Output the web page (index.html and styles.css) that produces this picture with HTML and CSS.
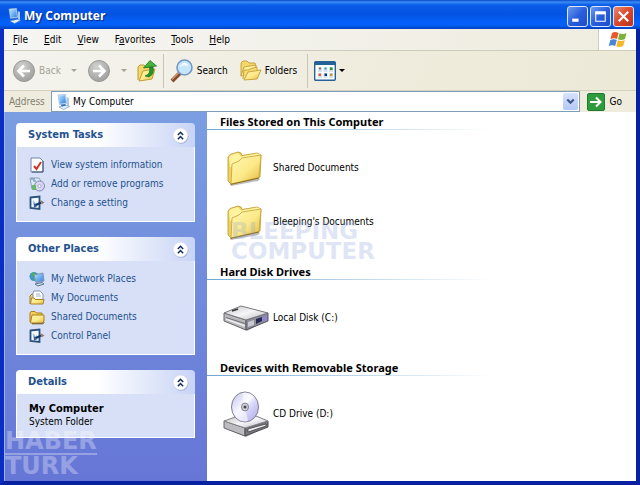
FILE: index.html
```html
<!DOCTYPE html>
<html lang="en">
<head>
<meta charset="utf-8">
<title>My Computer</title>
<link rel="stylesheet" href="styles.css">
</head>
<body>
<svg class="defs" aria-hidden="true">
  <defs>
    <linearGradient id="gFolder" x1="0" y1="0" x2="1" y2="1"><stop offset="0" stop-color="#fffab4"/><stop offset=".55" stop-color="#fce887"/><stop offset="1" stop-color="#e3b83c"/></linearGradient>
    <linearGradient id="gScreen" x1="0" y1="0" x2="1" y2="1"><stop offset="0" stop-color="#b9e4ff"/><stop offset="1" stop-color="#2b7fe0"/></linearGradient>
    <radialGradient id="gRound" cx=".4" cy=".3" r=".75"><stop offset="0" stop-color="#d2d2d0"/><stop offset="1" stop-color="#9c9c9a"/></radialGradient>
    <linearGradient id="gTop" x1="0" y1="0" x2="1" y2="1"><stop offset="0" stop-color="#c4c4c8"/><stop offset=".5" stop-color="#f6f6f8"/><stop offset="1" stop-color="#b8b8c0"/></linearGradient>
    <linearGradient id="gDisc" x1="0" y1="0" x2="1" y2="1"><stop offset="0" stop-color="#c3c2ee"/><stop offset=".45" stop-color="#f8f8ff"/><stop offset=".6" stop-color="#d8d6fa"/><stop offset="1" stop-color="#aaa7e6"/></linearGradient>
    <symbol id="pc" viewBox="0 0 16 16">
      <path d="M3 1 10.500 .3l1.300 9.200-7.300 1z" fill="#d8e6f4" stroke="#8fb4dc" stroke-width=".6"/>
      <path d="M3.800 1.800 10 1.200l1 7.600-6.200.9z" fill="url(#gScreen)"/>
      <path d="M12 3l2 1v8.500l-2-1z" fill="#a9c8ea"/>
      <path d="M4 13 10.500 11l4 1.500-6 3z" fill="#e3effa" stroke="#5d8cc0" stroke-width=".6"/>
      <path d="M5.500 10.800 10 10l1 1.500-4 1z" fill="#2e6cc0"/>
    </symbol>
    <symbol id="folder" viewBox="0 0 36 36">
      <path d="M3 35 31 28l2 1-2 2-27 5z" fill="#555" opacity=".4"/>
      <path d="M1 7 3 4.500 11 2l3 1 1 2.500 15-2.500 4 2-1 22L4 34l-3-3z" fill="#f0d25e" stroke="#b99431" stroke-width=".8"/>
      <path d="M2 7.500 4 5l7-2 3 3.500 16-3 3 1-1 5L3 17z" fill="#fff3a0"/>
      <path d="m4 34 1-20 7-3 3-3 19-3-2 22.500z" fill="url(#gFolder)" stroke="#c5a03a" stroke-width=".8"/>
      <path d="m3.500 34.500 28.500-6.500" stroke="#8e6c1c"/>
    </symbol>
    <symbol id="smallfolder" viewBox="0 0 16 16">
      <path d="M1 13V4l1-1.500h4L7.500 4H13v2" fill="#f4cf58" stroke="#a97f1b"/>
      <path d="M1.500 14 3 6h12v6l-1.500 2z" fill="url(#gFolder)" stroke="#a97f1b"/>
      <path d="M3 14.800h11l1.300-1.800" fill="none" stroke="#665220"/>
    </symbol>
    <symbol id="panel" viewBox="0 0 16 16">
      <path d="m1.500 2.500 9-1v12.500l-9-1z" fill="#f5faff" stroke="#2a517e" stroke-width="1.800"/>
      <path d="m4 6 2 3 2-1" fill="none" stroke="#9cc0e0" stroke-width="1.500"/>
      <path d="M6 10.500 12 7.500" stroke="#183a68" stroke-width="2"/>
      <path d="m11.500 5 4 2.500-3 2z" fill="#9b776a"/>
      <path d="m4.500 8 4 3-3.500 1.500z" fill="#375f94"/>
    </symbol>
    <symbol id="chev" viewBox="0 0 16 16">
      <circle cx="8.500" cy="8.800" r="7" fill="#7083b5" opacity=".55"/>
      <circle cx="8" cy="8" r="7" fill="#fff" stroke="#cdd5ea" stroke-width=".6"/>
      <path d="m5.500 7.500 2.500-2.500 2.500 2.500M5.500 11.500 8 9l2.500 2.500" fill="none" stroke="#122a5c" stroke-width="1.400"/>
    </symbol>
  </defs>
</svg>

<div class="window">
  <header class="titlebar">
    <svg class="i16"><use href="#pc"/></svg>
    <h1>My Computer</h1>
    <div class="controls">
      <button class="ctl" aria-label="Minimize"><svg viewBox="0 0 18 18"><path d="M4 12.500h6" stroke="#fff" stroke-width="3"/></svg></button>
      <button class="ctl" aria-label="Maximize"><svg viewBox="0 0 18 18"><path d="M4 5.500h10" stroke="#fff" stroke-width="3"/><path d="M4.500 5v8.500h9V5" fill="none" stroke="#fff"/></svg></button>
      <button class="ctl close" aria-label="Close"><svg viewBox="0 0 18 18"><path d="m4.500 4.500 9 9m0-9-9 9" stroke="#fff" stroke-width="2"/></svg></button>
    </div>
  </header>

  <nav class="menubar">
    <button><u>F</u>ile</button>
    <button><u>E</u>dit</button>
    <button><u>V</u>iew</button>
    <button>F<u>a</u>vorites</button>
    <button><u>T</u>ools</button>
    <button><u>H</u>elp</button>
    <span class="flag">
      <svg viewBox="0 0 20 18">
        <path d="M4 2q3-2 6.500 0L9 8Q6 6.500 2.500 8z" fill="#e8582b"/>
        <path d="M11.500 2.300q3.500 1.500 7-.3L17 8q-4 2-7 .3z" fill="#79b33c"/>
        <path d="M2.300 9q3.300-1.600 6.500 0l-1.600 6Q4 13.500.7 15z" fill="#4a86d8"/>
        <path d="M9.800 9.300q3.500 1.500 7-.3l-1.600 6q-3.700 2-7 .3z" fill="#f3b92b"/>
      </svg>
    </span>
  </nav>

  <div class="toolbar">
    <button class="tool off"><svg class="i24" viewBox="0 0 24 24"><circle cx="12" cy="12" r="10.500" fill="url(#gRound)" stroke="#999996"/><path d="M18 12H7m5-5.500L6.500 12l5.500 5.500" fill="none" stroke="#fff" stroke-width="2.600"/></svg>Back</button>
    <button class="drop off" aria-label="Back history"></button>
    <button class="tool off" aria-label="Forward"><svg class="i24" viewBox="0 0 24 24"><circle cx="12" cy="12" r="10.500" fill="url(#gRound)" stroke="#999996"/><path d="M6 12h11m-5-5.500 5.500 5.500-5.500 5.500" fill="none" stroke="#fff" stroke-width="2.600"/></svg></button>
    <button class="drop off" aria-label="Forward history"></button>
    <button class="tool up" aria-label="Up"><svg viewBox="0 0 20 24"><path d="M1 21V8l2-2h4l2 2h5v4" fill="#f3d768" stroke="#c29b35"/><path d="m2 22 4-10 12-2-3 10z" fill="url(#gFolder)" stroke="#c29b35"/><path d="M8 17q6-2 4.500-9H16q2 7-4 10z" fill="#25942a" stroke="#11661a" stroke-width=".6"/><path d="M6.500 9 13 1.500 19.500 7z" fill="#43b53a" stroke="#11661a" stroke-width=".7"/></svg></button>
    <span class="sep"></span>
    <button class="tool"><svg class="i24" viewBox="0 0 24 24"><path d="m2 22 8-8" stroke="#87492e" stroke-width="4"/><path d="m2 20.500 7-7" stroke="#d5926b" stroke-width="1.500"/><circle cx="14.500" cy="8.500" r="7.500" fill="#c5e7fc" stroke="#7397c6" stroke-width="1.600"/><path d="M10 8q1-4 5-4 3 0 3 3-5-2-8 1z" fill="#fff" opacity=".9"/></svg>Search</button>
    <button class="tool folders"><svg class="i24" viewBox="0 0 24 24"><path d="M3 17V4l2-2h4l2 2h6l1 4" fill="#f3d768" stroke="#c9a43e"/><path d="m3 17 3-9 12-2-1 9z" fill="#fff2a0" stroke="#c9a43e"/><path d="m5 20 1-9h4l2-1 7-2v5" fill="#f6dc75" stroke="#c9a43e"/><path d="m6 21 4-8 13-2-4 9z" fill="url(#gFolder)" stroke="#c9a43e"/></svg>Folders</button>
    <span class="sep"></span>
    <button class="tool views" aria-label="Views"><svg viewBox="0 0 22 20"><rect x=".7" y=".7" width="20.600" height="18.600" rx="1" fill="#fff" stroke="#24619a" stroke-width="1.400"/><path d="M1 2.500h20" stroke="#24619a" stroke-width="3"/><g fill="#d3e2ee"><path d="M4 6h4v5H4zm5.500 0h4v5h-4zm5.500 0h4v5h-4zM4 12h4v5H4zm5.500 0h4v5h-4zm5.500 0h4v5h-4z"/></g><path d="M5 6.500h2v2H5z" fill="#777"/><path d="M10.500 6.500h2v2h-2z" fill="#3e9bb8"/><path d="M16 6.500h2.500v2.500H16z" fill="#189321"/><path d="M4.500 12.500H7V15H4.500z" fill="#e35e3a"/><path d="M10.500 12.500H13V15h-2.500z" fill="#122e88"/><path d="M16 12.500h2.500V15H16z" fill="#c69a31"/></svg></button>
    <button class="drop" aria-label="View options"></button>
  </div>

  <form class="address">
    <label for="addr">A<u>d</u>dress</label>
    <div class="combo">
      <svg class="i16"><use href="#pc"/></svg>
      <input id="addr" type="text" value="My Computer">
      <button type="button" aria-label="Show addresses"><svg viewBox="0 0 14 16"><path d="m4 6 3 3 3-3" fill="none" stroke="#3c5688" stroke-width="2"/></svg></button>
    </div>
    <button type="button" class="go"><svg viewBox="0 0 18 18"><rect x=".5" y=".5" width="17" height="17" rx="1.500" fill="#2e9b3c" stroke="#207a30"/><path d="M3 9h10M9 4.500 13.500 9 9 13.500" fill="none" stroke="#fff" stroke-width="2"/></svg>Go</button>
  </form>

  <div class="content">
    <aside class="side">
      <section class="box">
        <h2>System Tasks<button aria-label="Collapse System Tasks"><svg><use href="#chev"/></svg></button></h2>
        <ul>
          <li><a href="#"><svg class="i16" viewBox="0 0 16 16"><path d="M2 1h9l3 3v11H2z" fill="#fff" stroke="#6e83a8"/><path d="M14 4v11H3" fill="none" stroke="#3d5278"/><path d="m5 9 2.500 3L12 5" fill="none" stroke="#d2352b" stroke-width="2"/></svg>View system information</a></li>
          <li><a href="#"><svg class="i16" viewBox="0 0 16 16"><path d="M1 2h9l2 3v8H3z" fill="#dce8f2" stroke="#8ca0b6"/><path d="M2 3h4M4 5h3" stroke="#5a83b4"/><circle cx="10.500" cy="10" r="5" fill="#d9d6f5" stroke="#8087b3"/><circle cx="10.500" cy="10" r="1.500" fill="#fff" stroke="#8087b3" stroke-width=".6"/><path d="M3 9h4v5H3z" fill="#69b96a"/></svg>Add or remove programs</a></li>
          <li><a href="#"><svg class="i16"><use href="#panel"/></svg>Change a setting</a></li>
        </ul>
      </section>
      <section class="box">
        <h2>Other Places<button aria-label="Collapse Other Places"><svg><use href="#chev"/></svg></button></h2>
        <ul>
          <li><a href="#"><svg class="i16" viewBox="0 0 16 16"><circle cx="5" cy="5.500" r="4.500" fill="#4098c7"/><path d="M2 3q3-3 5 0L4 6zM4 7l4 1-3 2z" fill="#4eaf52"/><path d="m5 4 9-2 1 8-8 1.500z" fill="url(#gScreen)" stroke="#8296b3"/><path d="m6 13 7-1.500 2 1.500-6 2z" fill="#cbd9e8" stroke="#5f7898"/></svg>My Network Places</a></li>
          <li><a href="#"><svg class="i16" viewBox="0 0 16 16"><path d="M1 14V6l2-2h2" fill="#f2cf62" stroke="#9f7f34"/><path d="M5 1h6l3 3v9H4V3z" fill="#fff" stroke="#8793a5"/><path d="M7 4h4M7 6h5" stroke="#9fb0cc"/><path d="m1.500 14 1-6H5l1 1.500h9L14 14z" fill="url(#gFolder)" stroke="#a9822d"/></svg>My Documents</a></li>
          <li><a href="#"><svg class="i16"><use href="#smallfolder"/></svg>Shared Documents</a></li>
          <li><a href="#"><svg class="i16"><use href="#panel"/></svg>Control Panel</a></li>
        </ul>
      </section>
      <section class="box">
        <h2>Details<button aria-label="Collapse Details"><svg><use href="#chev"/></svg></button></h2>
        <p><strong>My Computer</strong>System Folder</p>
      </section>
      <div class="mark-left"><span>HABER</span><span>TURK</span></div>
    </aside>

    <main class="main">
      <section class="group">
        <h2>Files Stored on This Computer</h2>
        <a class="item" href="#"><svg class="folder"><use href="#folder"/></svg>Shared Documents</a>
        <a class="item" href="#"><svg class="folder"><use href="#folder"/></svg>Bleeping's Documents</a>
      </section>
      <section class="group">
        <h2>Hard Disk Drives</h2>
        <a class="item" href="#"><svg viewBox="0 0 46 26">
          <path d="M2 15 24 26 45 15 26 21z" fill="#444" opacity=".4"/>
          <path d="M1 8 23 15v10L1 16z" fill="#b9b9bd" stroke="#66666a"/>
          <path d="M23 15 45 8v8L23 25z" fill="#8d8c9b" stroke="#55555c"/>
          <path d="M1 8 18 1l27 7-22 7z" fill="url(#gTop)" stroke="#77777c"/>
          <path d="m3 14 19 7" stroke="#eee" stroke-width="1.500"/><path d="m3 12.500 19 6" stroke="#707078"/>
          <path d="m9 6 6-2" stroke="#333" stroke-width="1.600"/>
          <path d="m33 14 6-2v4l-6 3z" fill="#262a52"/><path d="m39 12 5-2v5l-5 2z" fill="#8d86ca"/>
          <path d="m25 17 6-2v5l-6 2z" fill="#c9c9cf"/>
        </svg>Local Disk (C:)</a>
      </section>
      <section class="group">
        <h2>Devices with Removable Storage</h2>
        <a class="item" href="#"><svg viewBox="0 0 46 46">
          <path d="m3 38 20 8 22-11-20 6z" fill="#444" opacity=".4"/>
          <path d="m1 30 21 7v8L1 37z" fill="#bcbcc0" stroke="#66666a"/>
          <path d="m22 37 23-7v6L22 45z" fill="#77777d" stroke="#4c4c52"/>
          <path d="m1 30 14-5h18l12 5-23 7z" fill="url(#gTop)" stroke="#818187"/>
          <path d="m25 38 18-5v2l-18 6z" fill="#f2f2f4" stroke="#333" stroke-width=".7"/>
          <ellipse cx="22" cy="16" rx="13.500" ry="15" fill="url(#gDisc)" stroke="#7d7d92"/>
          <path d="m22 16-9 10q5 6 12 4zM22 16l8-11q-5-5-11-3z" fill="#fff" opacity=".55"/>
          <ellipse cx="22" cy="16" rx="3.500" ry="4" fill="#cfcfda" stroke="#82828f"/><circle cx="22" cy="16" r="1.500" fill="#444"/>
        </svg>CD Drive (D:)</a>
      </section>
      <div class="mark-main"><span>BLEEPING</span><span>COMPUTER</span></div>
    </main>
  </div>
</div>
</body>
</html>
```

FILE: styles.css
```css
* { box-sizing: border-box; }
body {
  margin: 0;
  background: #0a3fd0;
  color: #000;
  font: 10px/14px "DejaVu Sans Condensed", "Noto Sans", sans-serif;
}
button, input {
  margin: 0;
  padding: 0;
  border: 0;
  background: none;
  color: inherit;
  font: inherit;
}
a { color: inherit; text-decoration: none; }
svg { display: block; flex: none; }
h1, h2, p, ul { margin: 0; padding: 0; }
ul { list-style: none; }
.defs { position: absolute; width: 0; height: 0; }
.i16 { width: 16px; height: 16px; }
.i24 { width: 24px; height: 24px; }

.window {
  display: flex;
  flex-direction: column;
  min-height: 100vh;
  border: solid #0a2ec4;
  border-width: 0 4px 4px;
  border-right-color: #0721a0;
  border-bottom-color: #0721a0;
}
.titlebar {
  display: flex;
  align-items: center;
  gap: 2px;
  height: 29px;
  margin: 0 -4px;
  padding: 3px 6px 0;
  background: linear-gradient(#0a49c4, #3a8cf6 2px, #0a5ce6 5px, #0453e2 14px, #0460fa 22px, #0560f8 25px, #0340c0);
}
.titlebar h1 {
  flex: 1;
  color: #fff;
  font: bold 12px/16px "Open Sans", "Noto Sans", sans-serif;
  text-shadow: 1px 1px 1px #0a2a80;
}
.controls { display: flex; gap: 2px; }
.ctl {
  width: 21px;
  height: 21px;
  border: 1px solid #dbe7ff;
  border-radius: 3px;
  background: linear-gradient(135deg, #6b9cf0, #2a5edc 50%, #1f4cc8);
}
.ctl svg { width: 100%; height: 100%; }
.close { background: linear-gradient(135deg, #e88a70, #d9482c 50%, #b8331a); }

.menubar {
  display: flex;
  align-items: stretch;
  gap: 16px;
  height: 22px;
  padding-left: 9px;
  border-bottom: 1px solid #cfccbb;
  background: linear-gradient(90deg, #f5f5f3, #efecdf);
}
.flag {
  display: flex;
  align-items: center;
  justify-content: center;
  width: 38px;
  margin-left: auto;
  border-left: 1px solid #cfccbb;
  background: #fff;
}
.flag svg { width: 20px; height: 18px; }

.toolbar {
  display: flex;
  align-items: center;
  height: 40px;
  padding-left: 8px;
  border-bottom: 1px solid #d5d1bf;
  background: linear-gradient(100deg, #f4f3ee, #efecdd 60%, #ede9d7);
}
.tool { display: flex; align-items: center; gap: 3px; }
.off { color: #a5a396; }
.drop {
  width: 26px;
  height: 24px;
  display: flex;
  align-items: center;
  justify-content: center;
}
.drop::before {
  content: "";
  border: solid transparent;
  border-width: 3px 3px 0;
  border-top-color: currentColor;
}
.up svg { width: 20px; height: 24px; }
.sep { width: 1px; height: 34px; margin: 0 6px; background: #c9c6b5; }
.folders { margin-left: 10px; }
.folders + .sep { margin-left: 10px; }
.views svg { width: 22px; height: 20px; }
.views + .drop { width: 12px; }

.address {
  display: flex;
  align-items: center;
  height: 21px;
  padding: 0 14px 0 5px;
  background: #efecde;
}
.address label { width: 42px; color: #83806f; }
.combo {
  display: flex;
  flex: 1;
  align-items: center;
  gap: 2px;
  height: 21px;
  padding: 1px 1px 1px 3px;
  border: 1px solid #7f9db9;
  background: #fff;
}
.combo input { flex: 1; min-width: 0; outline: 0; }
.combo button {
  width: 15px;
  height: 17px;
  border-radius: 2px;
  background: linear-gradient(#d6e2fd, #b4c8f4);
}
.go { display: flex; align-items: center; gap: 5px; margin-left: 7px; }
.go svg { width: 18px; height: 18px; }

.content { display: flex; flex: 1; }
.side {
  position: relative;
  display: flex;
  flex-direction: column;
  gap: 15px;
  width: 203px;
  padding: 11px 12px 11px 11px;
  border-left: 1px solid #9cb4f0;
  background: linear-gradient(#7b9ee2, #6676d6);
}
.box { color: #24528e; }
.box h2 {
  display: flex;
  align-items: center;
  justify-content: space-between;
  height: 24px;
  padding: 0 6px 0 12px;
  border-radius: 4px 4px 0 0;
  background: linear-gradient(90deg, #fff 45%, #c8d4f6);
  color: #24528e;
  font: bold 11px/14px "DejaVu Sans Condensed", "Noto Sans", sans-serif;
}
.box h2 svg { width: 17px; height: 17px; }
.box ul, .box p {
  padding: 8px 12px 9px;
  border: 1px solid #fff;
  border-top: 0;
  background: #d8e0f7;
}
.box a { display: flex; align-items: center; gap: 6px; height: 19px; }
.box p { color: #000; line-height: 13px; }
.box strong { display: block; font-size: 11px; }
.mark-left {
  position: absolute;
  left: 0;
  bottom: 3px;
  color: #fff;
  opacity: .3;
  font: bold 24px/23px "DejaVu Sans", sans-serif;
  pointer-events: none;
}
.mark-left span { display: block; }
.mark-left span + span { border-top: 2px solid #fff; }

.main { position: relative; flex: 1; background: #fff; }
.group { padding-bottom: 13px; }
.group h2 {
  height: 18px;
  margin-bottom: 11px;
  padding: 3px 0 0 13px;
  background: linear-gradient(90deg, #70a8d4, #fff 283px) bottom / 100% 1px no-repeat;
  font: bold 11px/14px "Noto Sans", sans-serif;
}
.item {
  display: flex;
  align-items: center;
  gap: 4px;
  height: 54px;
  padding-left: 16px;
}
.item svg { width: 46px; height: 46px; }
.item .folder { width: 36px; height: 36px; margin: 0 6px 0 4px; }
.mark-main {
  position: absolute;
  left: 24px;
  top: 109px;
  color: #8fa6d8;
  opacity: .28;
  font: bold 23px/20px "DejaVu Sans", sans-serif;
  pointer-events: none;
}
.mark-main span { display: block; }
```
